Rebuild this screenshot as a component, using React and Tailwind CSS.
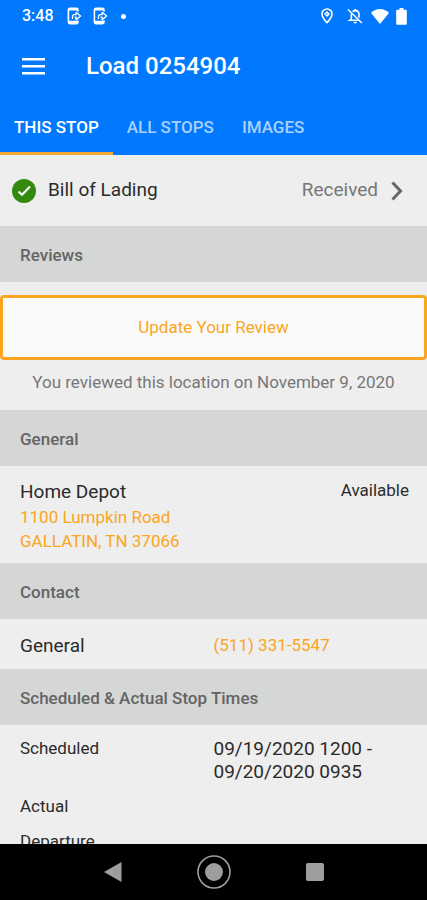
import { useState } from "react";

const TABS = ["THIS STOP", "ALL STOPS", "IMAGES"];

function PhoneForwardIcon() {
  return (
    <svg viewBox="0 0 15 18" className="w-[15px] h-[18px]" fill="none" stroke="currentColor" aria-hidden="true">
      <path d="M11 4.500V3a1.600 1.600 0 0 0-1.600-1.600H3A1.600 1.600 0 0 0 1.400 3v12A1.600 1.600 0 0 0 3 16.600h6.400A1.600 1.600 0 0 0 11 15v-1.500" strokeWidth="1.600" />
      <path d="M2 2.200h8.500M2 15h8.500" strokeWidth="2.600" />
      <path d="M5.500 12V9.300c0-1 .6-1.600 1.600-1.600h2V5.300L13.600 9l-4.500 3.700V10.200H7.500" strokeWidth="1.300" strokeLinejoin="round" />
    </svg>
  );
}

function StatusBar() {
  return (
    <div className="flex items-center justify-between h-8 pl-[22px] pr-5">
      <div className="flex items-center">
        <span className="w-[45px] text-base font-medium">3:48</span>
        <div className="flex items-center gap-[11px]">
          <PhoneForwardIcon />
          <PhoneForwardIcon />
        </div>
        <span className="w-[5px] h-[5px] ml-[13px] rounded-full bg-white" />
      </div>
      <div className="flex items-center">
        {/* location */}
        <svg viewBox="0 0 12 16" className="w-3 h-4" fill="none" stroke="currentColor" aria-hidden="true">
          <path d="M6 1C3.200 1 1 3.200 1 5.900 1 9.300 6 14.600 6 14.600s5-5.300 5-8.700C11 3.200 8.800 1 6 1Z" strokeWidth="1.600" />
          <path d="M6 3 9 6 6 9 3 6Z" fill="currentColor" stroke="none" />
          <path d="M5.200 6.900V5.800h1.600" strokeWidth="0.700" stroke="#0079ff" />
        </svg>
        {/* notifications off */}
        <svg viewBox="0 0 16 16" className="w-4 h-4 ml-[14px]" fill="none" stroke="currentColor" aria-hidden="true">
          <path d="M5.600 3.600A4 4 0 0 1 8.300 2.600c2.300 0 3.700 1.700 3.700 4v3.200M4.500 5.500c-.2.600-.2 1.200-.2 1.800v4.200L3 12.300h9" strokeWidth="1.600" />
          <path d="M8.300 1v2" strokeWidth="1.800" />
          <path d="M1 1.500 14.800 15" strokeWidth="1.500" />
          <path d="M6.500 13.800h3.400a1.700 1.700 0 0 1-3.400 0Z" fill="currentColor" stroke="none" />
        </svg>
        {/* wifi */}
        <svg viewBox="0 0 18 15" className="w-[18px] h-[15px] ml-2" fill="currentColor" aria-hidden="true">
          <path d="M9 15 0 4C2.500 1.300 5.600 0 9 0s6.500 1.300 9 4Z" />
        </svg>
        {/* battery */}
        <svg viewBox="0 0 11 17" className="w-[11px] h-[17px] ml-[7px]" fill="currentColor" aria-hidden="true">
          <path d="M3.500 0h4v1.800h2c.8 0 1.300.5 1.300 1.300v12.400c0 .8-.5 1.300-1.300 1.300h-8c-.8 0-1.300-.5-1.300-1.300V3.100c0-.8.5-1.300 1.300-1.300h2Z" />
        </svg>
      </div>
    </div>
  );
}

function SectionHeader({ children }) {
  return (
    <h2 className="flex items-center h-14 px-5 pt-1 bg-[#d5d7d6] text-[17px] font-medium text-[#646464]">
      {children}
    </h2>
  );
}

function NavBar() {
  return (
    <nav className="flex items-center justify-center gap-[67px] h-14 shrink-0 bg-black text-[#9e9e9e]">
      <button aria-label="Back" className="flex justify-center w-[34px]">
        <svg viewBox="0 0 18 20" className="w-[18px] h-5" fill="currentColor">
          <path d="M17.500 0v20L0 10Z" />
        </svg>
      </button>
      <button aria-label="Home">
        <svg viewBox="0 0 34 34" className="w-[34px] h-[34px]">
          <circle cx="17" cy="17" r="16" fill="none" stroke="currentColor" strokeWidth="1.600" />
          <circle cx="17" cy="17" r="9" fill="currentColor" />
        </svg>
      </button>
      <button aria-label="Recent apps" className="flex justify-center w-[34px]">
        <span className="w-[18px] h-[18px] rounded-xs bg-[#9e9e9e]" />
      </button>
    </nav>
  );
}

function App() {
  const [activeTab, setActiveTab] = useState("THIS STOP");

  return (
    <div className="flex flex-col h-screen bg-[#eeeeee] font-[Roboto,sans-serif] text-[#2b2b2b]">
      <header className="shrink-0 bg-[#0079ff] text-white">
        <StatusBar />
        <div className="flex items-center h-[68px] px-[22px]">
          <button aria-label="Open menu" className="w-16">
            <svg viewBox="0 0 23 17" className="w-[23px] h-[17px]" fill="currentColor">
              <path d="M0 0h23v2.600H0zM0 7h23v2.600H0zM0 14h23v2.600H0z" />
            </svg>
          </button>
          <h1 className="text-2xl font-medium">Load 0254904</h1>
        </div>
        <div className="flex h-[55px]">
          {TABS.map((tab) => (
            <button
              key={tab}
              onClick={() => setActiveTab(tab)}
              className={`px-[14px] pt-1 border-b-3 text-[17px] font-medium ${
                tab === activeTab ? "border-[#f5a833] text-white" : "border-transparent text-[#a9d0ff]"
              }`}
            >
              {tab}
            </button>
          ))}
        </div>
      </header>

      <main className="flex-1 min-h-0 overflow-hidden">
        <button className="flex items-center w-full h-[71px] px-3 text-left">
          <svg viewBox="0 0 24 24" className="w-6 h-6" aria-hidden="true">
            <circle cx="12" cy="12" r="12" fill="#348a10" />
            <path d="m6.500 12.500 3.500 3.300 8-8.300" fill="none" stroke="#fff" strokeWidth="2" />
          </svg>
          <span className="ml-3 text-[19px]">Bill of Lading</span>
          <span className="ml-auto text-[19px] text-[#777777]">Received</span>
          <svg viewBox="0 0 12 20" className="w-3 h-5 ml-[13px] mr-3" fill="none" stroke="#666" strokeWidth="3" aria-hidden="true">
            <path d="m1.500 1.500 8 8.500-8 8.500" />
          </svg>
        </button>

        <SectionHeader>Reviews</SectionHeader>
        <div className="pt-[13px] pb-4 text-center">
          <button className="w-full h-[65px] border-3 border-[#fba521] rounded-sm bg-[#fafafa] text-[17px] text-[#fba521]">
            Update Your Review
          </button>
          <p className="mt-[10px] text-[17px] leading-6 text-[#777777]">
            You reviewed this location on November 9, 2020
          </p>
        </div>

        <SectionHeader>General</SectionHeader>
        <div className="flex items-start justify-between pl-5 pr-[18px] pt-3 pb-[10px]">
          <div>
            <p className="text-[19px] leading-[27px]">Home Depot</p>
            <a href="#directions" className="block text-[17px] leading-6 text-[#fba521]">
              1100 Lumpkin Road
              <br />
              GALLATIN, TN 37066
            </a>
          </div>
          <p className="text-[17px] leading-6">Available</p>
        </div>

        <SectionHeader>Contact</SectionHeader>
        <div className="grid grid-cols-2 items-center h-[50px] pt-1">
          <span className="pl-5 text-[19px]">General</span>
          <a href="tel:5113315547" className="text-[17px] text-[#fba521]">
            (511) 331-5547
          </a>
        </div>

        <SectionHeader>Scheduled &amp; Actual Stop Times</SectionHeader>
        <dl className="grid grid-cols-2 pt-3 text-[17px] leading-[23px]">
          <dt className="pl-5">Scheduled</dt>
          <dd className="text-[19px] leading-[23px]">
            09/19/2020 1200 -
            <br />
            09/20/2020 0935
          </dd>
          <dt className="pl-5 pt-3">Actual</dt>
          <dd />
          <dt className="pl-5 pt-3">Departure</dt>
          <dd />
        </dl>
      </main>

      <NavBar />
    </div>
  );
}

export default App;
